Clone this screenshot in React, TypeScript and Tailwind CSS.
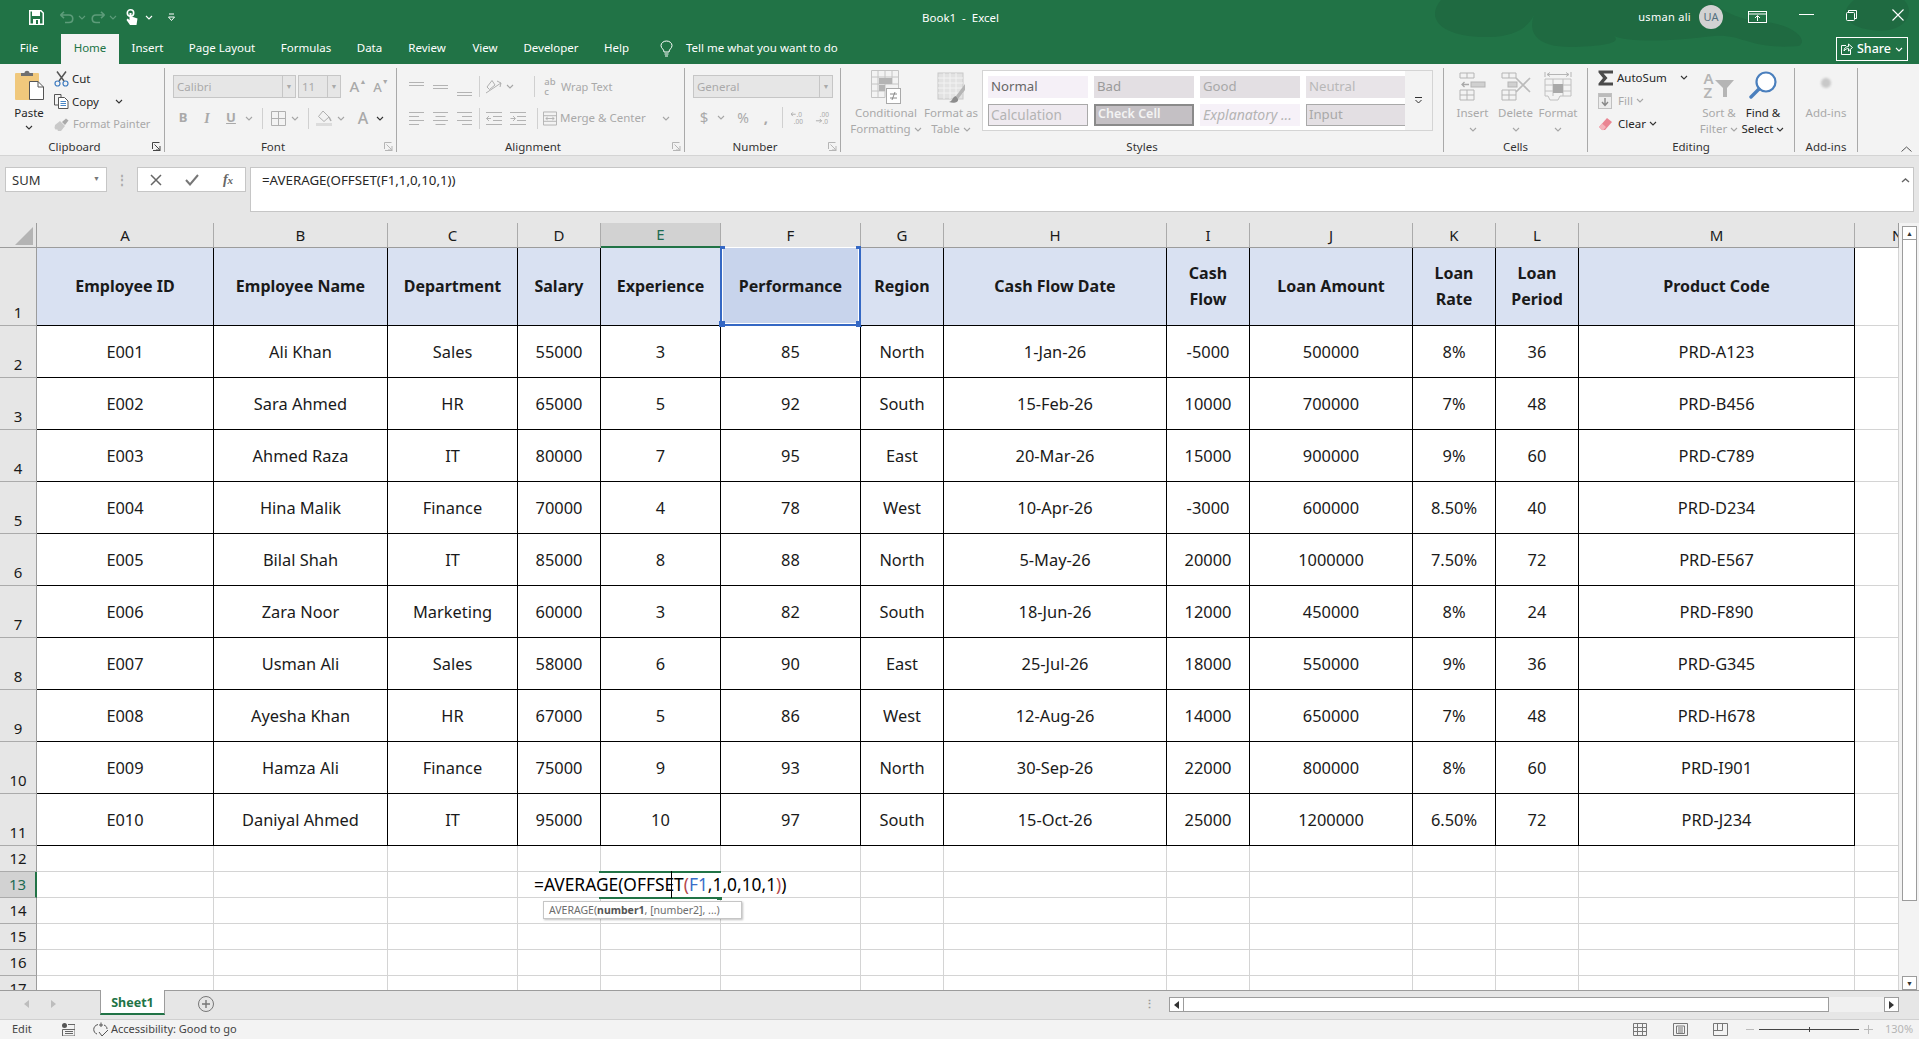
import React from "react";

const Chev = ({ c = "#a6a6a6" }: { c?: string }) => (
  <svg width="8" height="5" viewBox="0 0 8 5" fill="none" className="shrink-0">
    <path d="M1 1L4 4L7 1" stroke={c} strokeWidth="1.1" />
  </svg>
);

const Slot = ({ w, children }: { w: string; children?: React.ReactNode }) => (
  <div className={`${w} h-full flex items-center justify-center shrink-0`}>{children}</div>
);

const VSep = () => <div className="w-px h-[21px] bg-[#d0d0d0]" />;

const Launcher = ({ c = "#b5b5b5" }: { c?: string }) => (
  <svg width="9" height="9" viewBox="0 0 9 9" fill="none" className="absolute right-[3px] bottom-[4px]">
    <path d="M0.5 7V0.5H7.5M8.5 8.5H1M2.5 2.5L7.5 7.5M8 4V8H4" stroke={c} strokeWidth="1" />
  </svg>
);

const Group = ({ w, label, launcher, lc, children }: { w: string; label: string; launcher?: boolean; lc?: string; children: React.ReactNode }) => (
  <>
    <div className={`${w} relative flex flex-col shrink-0`}>
      <div className="h-[75px]">{children}</div>
      <div className={`h-[17px] leading-[17px] text-center text-[11.5px] text-[#333] ${launcher ? "pr-[15px]" : ""}`}>{label}</div>
      {launcher && <Launcher c={lc} />}
    </div>
    <div className="w-px h-[84px] mt-1 bg-[#a9a9a9] shrink-0" />
  </>
);

const Big = ({ w, icon, l1, l2, chev = true, dark }: { w: string; icon: React.ReactNode; l1: string; l2?: string; chev?: boolean; dark?: boolean }) => (
  <div className={`${w} flex flex-col items-center shrink-0 ${dark ? "text-[#262626]" : "text-[#a9a9a9]"}`}>
    <div className="h-[41px] pt-[4px] flex items-center justify-center">{icon}</div>
    <div className="h-[16px] leading-[16px] whitespace-nowrap">{l1}</div>
    <div className="h-[16px] leading-[16px] whitespace-nowrap flex items-center gap-[3px]">
      {l2}
      {chev && <Chev c={dark ? "#333" : "#a6a6a6"} />}
    </div>
  </div>
);

const Cut = () => (
  <svg width="15" height="16" viewBox="0 0 15 16" fill="none">
    <path d="M3 0.5L10 10M12 0.5L5 10" stroke="#555" strokeWidth="1.5" />
    <circle cx="3.5" cy="12.5" r="2.5" stroke="#3f7cc0" strokeWidth="1.2" />
    <circle cx="11.5" cy="12.5" r="2.5" stroke="#3f7cc0" strokeWidth="1.2" />
  </svg>
);
const Copy = () => (
  <svg width="15" height="15" viewBox="0 0 15 15" fill="none">
    <path d="M7 3V0.5H0.5V11H4" stroke="#555" />
    <path d="M4.5 3.5H10.5L14 7V14.5H4.5Z" fill="#fff" stroke="#555" />
    <path d="M6.5 7.5H12M6.5 9.5H12M6.5 11.5H12" stroke="#4a86c5" />
  </svg>
);
const Painter = () => (
  <svg width="16" height="15" viewBox="0 0 16 15" fill="none">
    <path d="M1 8L6 4L11 9L7 14L4 14L3 12L2 13L0.5 11Z" fill="#c9c9c9" />
    <path d="M8 5L12 1.5L14.5 3.5L11 8Z" fill="#aaa" />
  </svg>
);
const Paste = () => (
  <svg width="29" height="30" viewBox="0 0 29 30" fill="none">
    <rect x="0" y="3" width="24" height="27" rx="1" fill="#f0c87c" />
    <path d="M6 6V3H9.5C9.5 0 14.5 0 14.5 3H18V6Z" fill="#6f6f6f" />
    <path d="M14.5 11.5H23L28.5 17V29.5H14.5Z" fill="#fff" stroke="#555" />
    <path d="M23 11.5V17H28.5" stroke="#555" />
  </svg>
);

const COLS = "grid-cols-[37px_177px_174px_130px_83px_120px_140px_83px_223px_83px_163px_83px_83px_276px_44px]";
const COL_LETTERS = ["A", "B", "C", "D", "E", "F", "G", "H", "I", "J", "K", "L", "M"];
const HEAD = ["Employee ID", "Employee Name", "Department", "Salary", "Experience", "Performance", "Region", "Cash Flow Date", "Cash\nFlow", "Loan Amount", "Loan\nRate", "Loan\nPeriod", "Product Code"];
const ROWS: string[][] = [
  ["E001", "Ali Khan", "Sales", "55000", "3", "85", "North", "1-Jan-26", "-5000", "500000", "8%", "36", "PRD-A123"],
  ["E002", "Sara Ahmed", "HR", "65000", "5", "92", "South", "15-Feb-26", "10000", "700000", "7%", "48", "PRD-B456"],
  ["E003", "Ahmed Raza", "IT", "80000", "7", "95", "East", "20-Mar-26", "15000", "900000", "9%", "60", "PRD-C789"],
  ["E004", "Hina Malik", "Finance", "70000", "4", "78", "West", "10-Apr-26", "-3000", "600000", "8.50%", "40", "PRD-D234"],
  ["E005", "Bilal Shah", "IT", "85000", "8", "88", "North", "5-May-26", "20000", "1000000", "7.50%", "72", "PRD-E567"],
  ["E006", "Zara Noor", "Marketing", "60000", "3", "82", "South", "18-Jun-26", "12000", "450000", "8%", "24", "PRD-F890"],
  ["E007", "Usman Ali", "Sales", "58000", "6", "90", "East", "25-Jul-26", "18000", "550000", "9%", "36", "PRD-G345"],
  ["E008", "Ayesha Khan", "HR", "67000", "5", "86", "West", "12-Aug-26", "14000", "650000", "7%", "48", "PRD-H678"],
  ["E009", "Hamza Ali", "Finance", "75000", "9", "93", "North", "30-Sep-26", "22000", "800000", "8%", "60", "PRD-I901"],
  ["E010", "Daniyal Ahmed", "IT", "95000", "10", "97", "South", "15-Oct-26", "25000", "1200000", "6.50%", "72", "PRD-J234"],
];

const RowHead = ({ n, active }: { n: number; active?: boolean }) => (
  <div className={`flex items-end justify-center leading-[25px] text-[15px] ${active ? "bg-[#d2d2d2] text-[#1f6b52] border-r-2 border-r-[#217346] border-b border-b-[#ababab]" : "bg-[#e6e6e6] text-[#1a1a1a] border-r border-r-[#9c9c9c] border-b border-b-[#ababab]"}`}>
    {n}
  </div>
);

const Empty = () => <div className="bg-white border-r border-r-[#d4d4d4] border-b border-b-[#d4d4d4]" />;

const TABS: [string, string][] = [
  ["Insert", "w-[57px]"],
  ["Page Layout", "w-[92px]"],
  ["Formulas", "w-[76px]"],
  ["Data", "w-[51px]"],
  ["Review", "w-[64px]"],
  ["View", "w-[52px]"],
  ["Developer", "w-[80px]"],
  ["Help", "w-[51px]"],
];

export default function App() {
  return (
    <div className="w-[1919px] h-[1039px] overflow-hidden flex flex-col bg-[#e6e6e6] font-['Noto_Sans',sans-serif] text-[11.5px] text-[#262626]">
      {/* Title bar */}
      <div className="relative h-[64px] shrink-0 bg-[#217346] text-white">
        <svg width="520" height="64" viewBox="0 0 520 64" className="absolute left-[1399px] top-0" fill="#1f6a41">
          <path d="M42 0C25 20 45 38 90 37C120 36 130 25 135 15C128 35 140 48 175 47C210 46 222 42 215 36C235 44 280 40 315 36C345 34 350 50 400 46C410 40 395 22 350 20C330 15 320 8 310 0Z" />
          <path d="M455 0C430 20 465 34 490 30C510 26 515 10 505 0Z" />
        </svg>
        {/* Quick access */}
        <div className="relative h-[34px] flex items-center">
          <Slot w="w-[58px] pl-[14px]">
            <svg width="15" height="15" viewBox="0 0 15 15" fill="none">
              <path d="M0.75 0.75H12L14.25 3V14.25H0.75Z" stroke="#fff" strokeWidth="1.5" />
              <rect x="3" y="1" width="8" height="5" fill="#fff" />
              <rect x="4" y="9" width="7" height="5" fill="#fff" />
              <rect x="7" y="10" width="2" height="4" fill="#217346" />
            </svg>
          </Slot>
          <Slot w="w-[16px]">
            <svg width="15" height="13" viewBox="0 0 15 13" fill="none">
              <path d="M1.5 4H10C15 4 15 11.5 10 11.5H6M1.5 4L5 0.8M1.5 4L5 7.2" stroke="#5d9c7a" strokeWidth="1.6" />
            </svg>
          </Slot>
          <Slot w="w-[16px]"><Chev c="#5d9c7a" /></Slot>
          <Slot w="w-[16px]">
            <svg width="15" height="13" viewBox="0 0 15 13" fill="none">
              <path d="M13.5 4H5C0 4 0 11.5 5 11.5H9M13.5 4L10 0.8M13.5 4L10 7.2" stroke="#5d9c7a" strokeWidth="1.6" />
            </svg>
          </Slot>
          <Slot w="w-[14px]"><Chev c="#5d9c7a" /></Slot>
          <Slot w="w-[20px] ml-[2px]">
            <svg width="12" height="17" viewBox="0 0 12 17" fill="none">
              <circle cx="4.5" cy="4" r="3.2" stroke="#fff" strokeWidth="1.6" />
              <path d="M3.5 4V11L1.5 9.5L0.5 11L4 16H10.5L11.5 9.5L5.5 7.5V4Z" fill="#fff" />
            </svg>
          </Slot>
          <Slot w="w-[14px]"><Chev c="#fff" /></Slot>
          <Slot w="w-[30px]">
            <svg width="7" height="9" viewBox="0 0 7 9" fill="none">
              <path d="M1 1H6M0.5 4H6.5L3.5 7.5Z" stroke="#fff" />
            </svg>
          </Slot>
          <div className="absolute left-[922px] top-[9px] text-[11.5px] leading-[17px] whitespace-pre">Book1  -  Excel</div>
          <div className="ml-auto flex items-center h-full">
            <span className="text-[11px] mr-[8px] tracking-[0.3px]">usman ali</span>
            <span className="w-[24px] h-[24px] rounded-full bg-[#d2d2d2] text-[#55707f] flex items-center justify-center text-[11px] mr-[25px]">UA</span>
            <svg width="20" height="13" viewBox="0 0 20 13" fill="none" className="mr-[31px]">
              <rect x="0.5" y="0.5" width="18" height="11" stroke="#fff" />
              <path d="M1 3H18M9.5 10V5M7 7L9.5 4.5L12 7" stroke="#fff" />
            </svg>
            <div className="w-[15px] h-px bg-white mr-[32px] mb-[6px]" />
            <svg width="11" height="11" viewBox="0 0 11 11" fill="none" className="mr-[35px] mb-[4px]">
              <rect x="0.5" y="2.5" width="8" height="8" rx="1" stroke="#fff" />
              <path d="M2.5 2.5V0.5H10.5V8.5H8.5" stroke="#fff" />
            </svg>
            <svg width="12" height="12" viewBox="0 0 12 12" fill="none" className="mr-[15px] mb-[4px]">
              <path d="M0.5 0.5L11.5 11.5M11.5 0.5L0.5 11.5" stroke="#fff" strokeWidth="1.1" />
            </svg>
          </div>
        </div>
        {/* Tabs */}
        <div className="relative h-[30px] flex text-[11.5px] leading-[28px]">
          <div className="w-[61px] text-center pr-[3px]">File</div>
          <div className="w-[58px] h-[30px] bg-[#f3f3f3] text-[#217346] text-center">Home</div>
          {TABS.map(([t, w]) => (
            <div key={t} className={`${w} text-center whitespace-nowrap`}>{t}</div>
          ))}
          <Slot w="w-[30px] ml-[9px] -mt-[1px]">
            <svg width="13" height="17" viewBox="0 0 13 17" fill="none">
              <path d="M4 12C4 9 1 8.5 1 5.5C1 3 3.5 1 6.5 1C9.5 1 12 3 12 5.5C12 8.5 9 9 9 12ZM4.5 14H8.5M5 16H8" stroke="#fff" />
            </svg>
          </Slot>
          <div className="ml-[5px] whitespace-nowrap">Tell me what you want to do</div>
          <div className="absolute left-[1836px] top-[3px] w-[72px] h-[24px] border border-white flex items-center justify-center gap-[4px] text-[12.5px] leading-none font-medium">
            <svg width="12" height="12" viewBox="0 0 12 12" fill="none">
              <path d="M5 2.5H0.5V11.5H9.5V7M3 8C3 5 5 3.5 7.5 3.5V1L11.5 4.5L7.5 8V5.5C6 5.5 4.5 6 3 8Z" stroke="#fff" />
            </svg>
            Share
            <Chev c="#fff" />
          </div>
        </div>
      </div>

      {/* Ribbon */}
      <div className="relative h-[92px] shrink-0 bg-[#f3f3f3] border-b border-b-[#d4d4d4] flex text-[11.5px]">
        <Group w="w-[164px]" label="Clipboard" launcher lc="#444">
          <div className="flex pt-[3px]">
            <div className="w-[50px] ml-[4px] flex flex-col items-center text-[#262626]">
              <div className="h-[34px] pt-[3px]"><Paste /></div>
              <div className="h-[18px] leading-[18px] mt-[3px]">Paste</div>
              <div className="h-[10px] flex items-center"><Chev c="#333" /></div>
            </div>
            <div className="flex flex-col">
              <div className="h-[23px] flex items-center gap-[3px]"><Cut /><span>Cut</span></div>
              <div className="h-[23px] flex items-center gap-[3px]"><Copy /><span>Copy</span><span className="ml-[13px]"><Chev c="#333" /></span></div>
              <div className="h-[23px] flex items-center gap-[3px] text-[#a9a9a9] text-[11px]"><Painter /><span className="whitespace-nowrap">Format Painter</span></div>
            </div>
          </div>
        </Group>

        <Group w="w-[231px]" label="Font" launcher>
          <div className="pt-[11px] pl-[8px] flex h-[34px]">
            <div className="w-[123px] h-[23px] border border-[#c6c6c6] bg-[#e6e6e6] flex text-[#aaa]">
              <span className="flex-1 pl-[3px] leading-[21px]">Calibri</span>
              <span className="w-[13px] border-l border-l-[#c6c6c6] flex items-center justify-center"><span className="text-[7px] leading-none">▼</span></span>
            </div>
            <div className="w-[43px] h-[23px] ml-[2px] border border-[#c6c6c6] bg-[#e6e6e6] flex text-[#aaa]">
              <span className="flex-1 pl-[3px] leading-[21px]">11</span>
              <span className="w-[13px] border-l border-l-[#c6c6c6] flex items-center justify-center"><span className="text-[7px] leading-none">▼</span></span>
            </div>
            <div className="ml-[6px] w-[22px] h-[23px] flex justify-center text-[15px] leading-[23px] text-[#a9a9a9] font-medium">A<span className="text-[7px] leading-[14px]">▲</span></div>
            <div className="w-[24px] h-[23px] flex justify-center text-[13px] leading-[25px] text-[#a9a9a9] font-medium">A<span className="text-[7px] leading-[14px]">▼</span></div>
          </div>
          <div className="h-[24px] mt-[8px] pl-[6px] flex text-[#a9a9a9] text-[13px]">
            <Slot w="w-[24px]"><b>B</b></Slot>
            <Slot w="w-[24px]"><i className="font-['Liberation_Serif'] text-[14px] font-bold">I</i></Slot>
            <Slot w="w-[24px]"><b className="underline">U</b></Slot>
            <Slot w="w-[12px]"><Chev /></Slot>
            <Slot w="w-[14px]"><VSep /></Slot>
            <Slot w="w-[18px]">
              <svg width="15" height="15" viewBox="0 0 15 15" fill="none"><path d="M0.5 0.5H14.5V14.5H0.5ZM7.5 0.5V14.5M0.5 7.5H14.5" stroke="#b0b0b0" /></svg>
            </Slot>
            <Slot w="w-[16px]"><Chev /></Slot>
            <Slot w="w-[10px]"><VSep /></Slot>
            <Slot w="w-[22px]">
              <svg width="16" height="16" viewBox="0 0 16 16" fill="none">
                <path d="M7 1L13 7L8 11.5L2.5 6.5Z" stroke="#b0b0b0" /><path d="M13 7L15 11" stroke="#b0b0b0" strokeWidth="1.5" />
                <rect x="0" y="13" width="16" height="3" fill="#dcdcdc" />
              </svg>
            </Slot>
            <Slot w="w-[12px]"><Chev /></Slot>
            <Slot w="w-[24px] ml-[4px]"><span className="text-[16px] font-medium">A</span></Slot>
            <Slot w="w-[10px]"><Chev c="#333" /></Slot>
          </div>
        </Group>

        <Group w="w-[287px]" label="Alignment" launcher>
          <div className="h-[29px] mt-[8px] pl-[7px] flex text-[#a9a9a9]">
            <Slot w="w-[24px]"><svg width="15" height="14" viewBox="0 0 15 14"><path d="M0 2.5H15M0 5.5H15" stroke="#b3b3b3" /></svg></Slot>
            <Slot w="w-[24px]"><svg width="15" height="14" viewBox="0 0 15 14"><path d="M0 5.5H15M0 8.5H15" stroke="#b3b3b3" /></svg></Slot>
            <Slot w="w-[24px]"><svg width="15" height="14" viewBox="0 0 15 14" className="mt-[6px]"><path d="M0 9.5H15M0 12.5H15" stroke="#b3b3b3" /></svg></Slot>
            <Slot w="w-[6px]"><VSep /></Slot>
            <Slot w="w-[23px]">
              <svg width="17" height="15" viewBox="0 0 17 15" fill="none"><path d="M2 8L7 1.5L10 6L4.5 10.5ZM1 14L16 4M12 2L16 4L15 8" stroke="#b0b0b0" /></svg>
            </Slot>
            <Slot w="w-[10px]"><Chev /></Slot>
            <div className="w-[16px]" />
            <Slot w="w-[6px]"><VSep /></Slot>
            <div className="w-[5px]" />
            <Slot w="w-[16px]">
              <div className="flex flex-col text-[9.5px] leading-[10px] text-[#aaa] font-medium"><span>ab</span><span>c</span></div>
            </Slot>
            <span className="ml-[3px] leading-[29px] whitespace-nowrap text-[11px]">Wrap Text</span>
          </div>
          <div className="h-[24px] mt-[5px] pl-[7px] flex text-[#a9a9a9]">
            <Slot w="w-[24px]"><svg width="15" height="13" viewBox="0 0 15 13"><path d="M0 .5H15M0 4.5H10M0 8.5H15M0 12.5H10" stroke="#b3b3b3" /></svg></Slot>
            <Slot w="w-[24px]"><svg width="15" height="13" viewBox="0 0 15 13"><path d="M0 .5H15M2.5 4.5H12.5M0 8.5H15M2.5 12.5H12.5" stroke="#b3b3b3" /></svg></Slot>
            <Slot w="w-[24px]"><svg width="15" height="13" viewBox="0 0 15 13"><path d="M0 .5H15M5 4.5H15M0 8.5H15M5 12.5H15" stroke="#b3b3b3" /></svg></Slot>
            <Slot w="w-[6px]"><VSep /></Slot>
            <Slot w="w-[24px]"><svg width="16" height="13" viewBox="0 0 16 13" fill="none"><path d="M0 .5H16M7 4.5H16M7 8.5H16M0 12.5H16M5 6.5H0.5M3 4L0.5 6.5L3 9" stroke="#b3b3b3" /></svg></Slot>
            <Slot w="w-[24px]"><svg width="16" height="13" viewBox="0 0 16 13" fill="none"><path d="M0 .5H16M7 4.5H16M7 8.5H16M0 12.5H16M0.5 6.5H5M3 4L5.5 6.5L3 9" stroke="#b3b3b3" /></svg></Slot>
            <div className="w-[4px]" />
            <Slot w="w-[6px]"><VSep /></Slot>
            <div className="w-[3px]" />
            <Slot w="w-[14px]">
              <svg width="15" height="15" viewBox="0 0 15 15" fill="none"><path d="M0.5 0.5H14.5V14.5H0.5ZM0.5 4.5H14.5M0.5 10.5H14.5M3 7.5H12M3 7.5L5 6M3 7.5L5 9M12 7.5L10 6M12 7.5L10 9" stroke="#b0b0b0" /></svg>
            </Slot>
            <span className="ml-[3px] leading-[24px] whitespace-nowrap">Merge &amp; Center</span>
            <span className="ml-[16px] flex items-center"><Chev /></span>
          </div>
        </Group>

        <Group w="w-[155px]" label="Number" launcher>
          <div className="pt-[11px] pl-[8px] h-[34px]">
            <div className="w-[140px] h-[23px] border border-[#c6c6c6] bg-[#e6e6e6] flex text-[#aaa]">
              <span className="flex-1 pl-[3px] leading-[21px]">General</span>
              <span className="w-[13px] border-l border-l-[#c6c6c6] flex items-center justify-center"><span className="text-[7px] leading-none">▼</span></span>
            </div>
          </div>
          <div className="h-[24px] mt-[7px] pl-[8px] flex text-[#a9a9a9]">
            <Slot w="w-[22px]"><span className="text-[15px]">$</span></Slot>
            <Slot w="w-[12px]"><Chev /></Slot>
            <Slot w="w-[32px]"><span className="text-[14px]">%</span></Slot>
            <Slot w="w-[14px]"><b className="text-[15px] leading-[15px]">,</b></Slot>
            <Slot w="w-[18px]"><VSep /></Slot>
            <Slot w="w-[14px]">
              <svg width="15" height="15" viewBox="0 0 15 15">
                <text x="6" y="6.5" fontSize="7" fill="#aaa">.0</text>
                <text x="3" y="14" fontSize="7" fill="#aaa">.00</text>
                <path d="M0 4H5M2 2L0 4L2 6" stroke="#aaa" fill="none" />
              </svg>
            </Slot>
            <Slot w="w-[15px] ml-[10px]">
              <svg width="16" height="15" viewBox="0 0 16 15">
                <text x="5" y="6.5" fontSize="7" fill="#aaa">.00</text>
                <text x="8" y="14" fontSize="7" fill="#aaa">.0</text>
                <path d="M1 11H7M5 9L7 11L5 13" stroke="#aaa" fill="none" />
              </svg>
            </Slot>
          </div>
        </Group>

        <Group w="w-[602px]" label="Styles">
          <div className="flex h-full pl-[10px]">
            <Big w="w-[70px]" l1="Conditional" l2="Formatting" icon={
              <svg width="30" height="34" viewBox="0 0 30 34" fill="none">
                <path d="M0.5 0.5H27.5V28M0.5 0.5V27.5H14M7 0.5V27.5M14 0.5V27.5M21 0.5V14M0.5 7H27.5M0.5 14H27.5M0.5 21H14" stroke="#c4c4c4" />
                <rect x="8" y="8" width="13" height="6" fill="#b4b4b4" /><rect x="8" y="15" width="6" height="6" fill="#b4b4b4" />
                <rect x="15.5" y="18.5" width="14" height="15" fill="#fff" stroke="#a9a9a9" />
                <path d="M19 24H26M19 28H26M24 22L21 30" stroke="#8a8a8a" />
              </svg>
            } />
            <Big w="w-[60px]" l1="Format as" l2="Table" icon={
              <svg width="30" height="34" viewBox="0 0 30 34" fill="none">
                <rect x="2" y="3" width="25" height="26" fill="#e2e2e2" stroke="#c8c8c8" />
                <path d="M2 8H27M2 13H27M2 18H27M2 23H27M8 3V29M14 3V29M20 3V29" stroke="#f3f3f3" />
                <path d="M29 14L20 26L22 29L29 20Z" fill="#b5b5b5" /><path d="M20 26C16 27 17 31 13 32C18 34 23 32 22 29Z" fill="#8c8c8c" />
              </svg>
            } />
            <div className="w-[451px] h-[61px] mt-[6px] ml-[1px] border border-[#d4d4d4] bg-white flex">
              <div className="w-[422px] pt-[5px] pl-[5px] grid grid-cols-[100px_100px_100px_100px] grid-rows-[22px_22px] gap-x-[6px] gap-y-[6px] text-[13.2px] leading-[21px]">
                <div className="bg-[#f5f0f7] text-[#666] pl-[3px]">Normal</div>
                <div className="bg-[#e3dfe3] text-[#9a9a9a] pl-[3px]">Bad</div>
                <div className="bg-[#e3dfe3] text-[#a8a8a8] pl-[3px]">Good</div>
                <div className="bg-[#e8e4e8] text-[#b8b8b8] pl-[3px]">Neutral</div>
                <div className="bg-[#efeaf0] border border-[#a9a9a9] text-[#b4b4b4] pl-[2px] leading-[19px] text-[13.6px]">Calculation</div>
                <div className="bg-[#c4c0c4] border-2 border-double border-[#8a8a8a] text-[#f3f3f3] font-semibold pl-[2px] leading-[16px] text-[12.5px]">Check Cell</div>
                <div className="bg-[#f6f1f8] text-[#b4b4b4] italic pl-[3px] whitespace-nowrap text-[14px]">Explanatory ...</div>
                <div className="bg-[#e3dfe3] border border-[#a9a9a9] text-[#a9a9a9] pl-[2px] leading-[19px]">Input</div>
              </div>
              <div className="flex-1 bg-[#f3f3f3] flex items-center justify-center">
                <svg width="7" height="7" viewBox="0 0 7 7" fill="none"><path d="M0 .5H7M0.5 3L3.5 6L6.5 3" stroke="#333" /></svg>
              </div>
            </div>
          </div>
        </Group>

        <Group w="w-[143px]" label="Cells">
          <div className="flex pl-[7px]">
            <Big w="w-[43px]" l1="Insert" icon={
              <svg width="27" height="29" viewBox="0 0 27 29" fill="none">
                <path d="M1 1H15V6H1ZM8 1V6M1 18H15V28H1ZM1 23H15M8 18V28" stroke="#b5b5b5" />
                <rect x="12" y="10" width="14" height="5" fill="#d0d0d0" stroke="#b5b5b5" />
                <path d="M10 12.5H3M5.5 10L3 12.5L5.5 15" stroke="#a9a9a9" strokeWidth="1.3" />
              </svg>
            } />
            <Big w="w-[43px]" l1="Delete" icon={
              <svg width="30" height="29" viewBox="0 0 30 29" fill="none">
                <path d="M1 1H15V6H1ZM8 1V6M1 18H15V28H1ZM1 23H15M8 18V28" stroke="#b5b5b5" />
                <rect x="7" y="10" width="9" height="5" fill="#d0d0d0" stroke="#b5b5b5" />
                <path d="M15 6L29 20M29 6L15 20" stroke="#bbb" strokeWidth="1.7" />
              </svg>
            } />
            <Big w="w-[42px]" l1="Format" icon={
              <svg width="28" height="31" viewBox="0 0 28 31" fill="none">
                <path d="M1 1V6M27 1V6M3 3.5H25M3 3.5L6 1.5M3 3.5L6 5.5M25 3.5L22 1.5M25 3.5L22 5.5" stroke="#b5b5b5" />
                <path d="M1 8H27V25H16L14 29H6L4 25H1ZM9 8V25M19 8V25M1 14H27M1 20H27" stroke="#c0c0c0" />
                <rect x="9" y="13" width="10" height="9" fill="#a9a9a9" />
              </svg>
            } />
          </div>
        </Group>

        <Group w="w-[206px]" label="Editing">
          <div className="flex">
            <div className="w-[108px] pt-[2px] pl-[10px] flex flex-col">
              <div className="h-[23px] flex items-center text-[#262626]">
                <svg width="16" height="16" viewBox="0 0 16 16"><path d="M0.5 0.5H15V3.5H5.5L9.5 8L5.5 12.5H15V15.5H0.5V13.5L5 8L0.5 2.5Z" fill="#4a4a4a" /></svg>
                <span className="ml-[3px]">AutoSum</span>
                <span className="ml-[13px]"><Chev c="#333" /></span>
              </div>
              <div className="h-[23px] flex items-center text-[#a9a9a9]">
                <svg width="15" height="16" viewBox="0 0 15 16" fill="none"><rect x="0.5" y="0.5" width="13" height="15" stroke="#c0c0c0" fill="#ececec" /><rect x="1" y="1" width="12" height="3" fill="#bbb" /><path d="M7 5V12M4 9L7 12.5L10 9" stroke="#888" strokeWidth="1.4" /></svg>
                <span className="ml-[5px]">Fill</span>
                <span className="ml-[3px]"><Chev /></span>
              </div>
              <div className="h-[23px] flex items-center text-[#262626]">
                <svg width="15" height="14" viewBox="0 0 15 14"><path d="M9 1L14 5L7 13L4 13L1 10Z" fill="#ea8592" /><path d="M1 10L4 6.5L8 10L5 13.5Z" fill="#f4b4bb" /></svg>
                <span className="ml-[5px]">Clear</span>
                <span className="ml-[3px]"><Chev c="#333" /></span>
              </div>
            </div>
            <Big w="w-[46px]" l1="Sort &" l2="Filter" icon={
              <div className="-mt-[4px] flex items-start text-[#b5b5b5] font-semibold text-[15px] leading-[14px]">
                <div className="flex flex-col w-[12px]"><span>A</span><span>Z</span></div>
                <svg width="20" height="20" viewBox="0 0 20 20" fill="none" className="mt-[8px] -ml-[1px]">
                  <path d="M0 1H19L12 9V18H8V9Z" fill="#b5b5b5" />
                </svg>
              </div>
            } />
            <Big w="w-[42px]" l1="Find &" l2="Select" dark icon={
              <div className="-mt-[4px]">
              <svg width="28" height="28" viewBox="0 0 28 28" fill="none">
                <circle cx="17" cy="11" r="9.5" stroke="#4a7fbd" strokeWidth="2.2" fill="#fff" />
                <path d="M10 18L2 26" stroke="#4a7fbd" strokeWidth="3.4" strokeLinecap="round" />
              </svg>
              </div>
            } />
          </div>
        </Group>

        <Group w="w-[62px]" label="Add-ins">
          <div className="flex flex-col items-center text-[#a9a9a9]">
            <div className="h-[41px] flex items-center pb-[3px]"><div className="w-[10px] h-[10px] rounded-full bg-[#c8c8c8] blur-[1px]" /></div>
            <div className="leading-[16px]">Add-ins</div>
          </div>
        </Group>

        <svg width="11" height="6" viewBox="0 0 11 6" fill="none" className="absolute left-[1901px] bottom-[3px]">
          <path d="M0.5 5.5L5.5 1L10.5 5.5" stroke="#555" />
        </svg>
      </div>

      {/* Formula bar */}
      <div className="h-[67px] shrink-0 bg-[#e6e6e6] pt-[11px] pl-[5px] flex">
        <div className="w-[102px] h-[25px] bg-white border border-[#c6c6c6] flex items-center px-[6px] justify-between text-[13px] text-[#333]">
          <span className="mt-[2px]">SUM</span>
          <span className="text-[7px] text-[#777]">▼</span>
        </div>
        <div className="w-[30px] h-[25px] flex items-center justify-center text-[#aaa] text-[12px] leading-none font-bold">⋮</div>
        <div className="w-[109px] h-[25px] bg-white border border-[#c6c6c6] flex items-center text-[#666]">
          <Slot w="w-[36px]"><svg width="12" height="12" viewBox="0 0 12 12" fill="none"><path d="M1 1L11 11M11 1L1 11" stroke="#666" strokeWidth="1.5" /></svg></Slot>
          <Slot w="w-[36px]"><svg width="14" height="12" viewBox="0 0 14 12" fill="none"><path d="M1 6L5 10.5L13 1" stroke="#777" strokeWidth="2" /></svg></Slot>
          <Slot w="w-[36px]"><i className="font-['Liberation_Serif'] text-[14px] font-bold leading-none">f<span className="text-[11px]">x</span></i></Slot>
        </div>
        <div className="w-[1664px] h-[45px] ml-[4px] bg-white border border-[#c6c6c6] relative pl-[11px] pt-[2px] text-[13.3px] leading-[20px] text-[#262626]">
          =AVERAGE(OFFSET(F1,1,0,10,1))
          <svg width="9" height="5" viewBox="0 0 9 5" fill="none" className="absolute right-[3px] top-[10px]"><path d="M1 4L4.5 1L8 4" stroke="#666" strokeWidth="1.4" /></svg>
        </div>
      </div>

      {/* Sheet */}
      <div className="h-[767px] shrink-0 flex bg-white">
        <div className={`w-[1899px] shrink-0 grid ${COLS} grid-rows-[25px_78px_repeat(10,52px)_repeat(6,26px)] overflow-hidden text-[#1a1a1a] relative`}>
          {/* Column header */}
          <div className="relative bg-[#e6e6e6] border-r border-r-[#9c9c9c] border-b border-b-[#9c9c9c]">
            <svg width="18" height="18" viewBox="0 0 18 18" className="absolute left-[15px] top-[4px]"><path d="M18 0V18H0Z" fill="#b4b4b4" /></svg>
          </div>
          {COL_LETTERS.map((c) => (
            <div key={c} className={`flex items-center justify-center text-[15px] border-r border-r-[#ababab] ${c === "E" ? "bg-[#d2d2d2] text-[#1f6b52] border-b-2 border-b-[#217346]" : "bg-[#e6e6e6] border-b border-b-[#9c9c9c]"}`}>{c}</div>
          ))}
          <div className="bg-[#e6e6e6] border-b border-b-[#9c9c9c] border-r border-r-[#9c9c9c] overflow-hidden pl-[37px] text-[15px] leading-[24px]">N</div>

          {/* Header row */}
          <RowHead n={1} />
          {HEAD.map((h, i) => (
            <div key={h} className={`relative flex items-center justify-center text-center whitespace-pre-line font-bold text-[16px] leading-[26px] pb-[1px] border-r border-r-black border-b border-b-black ${i === 5 ? "bg-[#c8d4ec]" : "bg-[#d9e1f2]"}`}>
              {h}
              {i === 5 && (
                <div className="absolute -left-px -top-px -right-px -bottom-px border-l-2 border-r-2 border-b-2 border-[#3568c4]">
                  <div className="absolute inset-0 border border-white" />
                  <div className="absolute -left-[2px] -top-[1px] w-[5px] h-[3px] bg-[#3568c4]" />
                  <div className="absolute -right-[2px] -top-[1px] w-[5px] h-[3px] bg-[#3568c4]" />
                  <div className="absolute -left-[3px] -bottom-[3px] w-[6px] h-[6px] bg-[#3568c4]" />
                  <div className="absolute -right-[3px] -bottom-[3px] w-[6px] h-[6px] bg-[#3568c4]" />
                </div>
              )}
            </div>
          ))}
          <Empty />

          {/* Data rows */}
          {ROWS.map((row, r) => (
            <React.Fragment key={r}>
              <RowHead n={r + 2} />
              {row.map((v, i) => (
                <div key={i} className="flex items-center justify-center text-[16.4px] pt-[1px] bg-white border-r border-r-black border-b border-b-black whitespace-nowrap">{v}</div>
              ))}
              <Empty />
            </React.Fragment>
          ))}

          {/* Row 12 */}
          <RowHead n={12} />
          {COL_LETTERS.map((c) => <Empty key={c} />)}
          <Empty />

          {/* Row 13 */}
          <RowHead n={13} active />
          <Empty /><Empty /><Empty />
          <div className="col-span-3 relative bg-white border-r border-r-[#d4d4d4] border-b border-b-[#d4d4d4]">
            <div className="absolute left-[16px] top-[0px] h-[25px] leading-[25px] text-[17.35px] whitespace-nowrap text-black">
              =AVERAGE(OFFSET<span className="text-[#b5484a]">(</span><span className="text-[#3a6ec8]">F1</span>,1,0,10,1<span className="text-[#b5484a]">)</span>)
            </div>
            <div className="absolute left-[81px] -top-[1px] w-[122px] h-[2px] bg-[#217346]" />
            <div className="absolute left-[81px] top-[25px] w-[118px] h-[2px] bg-[#217346]" />
            <div className="absolute left-[199px] top-[25px] w-[5px] h-[3px] bg-[#217346]" />
            <div className="absolute left-[153px] -top-[1px] w-px h-[27px] bg-black" />
            <div className="absolute z-10 left-[25px] top-[29px] w-[199px] h-[18px] bg-white border border-[#c6c6c6] shadow-[1px_1px_2px_rgba(0,0,0,0.25)] text-[10.5px] leading-[16px] text-[#6d6d6d] pl-[5px] whitespace-nowrap">
              AVERAGE(<b className="text-[#555]">number1</b>, [number2], ...)
            </div>
          </div>
          {COL_LETTERS.slice(6).map((c) => <Empty key={c} />)}
          <Empty />

          {[14, 15, 16, 17].map((n) => (
            <React.Fragment key={n}>
              <RowHead n={n} />
              {COL_LETTERS.map((c) => <Empty key={c} />)}
              <Empty />
            </React.Fragment>
          ))}
        </div>
        {/* Vertical scrollbar */}
        <div className="flex-1 bg-[#f3f3f3] flex flex-col items-center pt-[3px] pl-[3px] pr-[2px] border-r border-r-[#f3f3f3]">
          <div className="w-[15px] h-[14px] bg-white border border-[#9c9c9c] flex items-center justify-center text-[7px] leading-none text-[#333]">▲</div>
          <div className="w-[15px] h-[661px] bg-white border-x border-b border-[#9c9c9c]" />
          <div className="flex-1" />
          <div className="w-[15px] h-[14px] bg-white border border-[#9c9c9c] flex items-center justify-center text-[7px] leading-none text-[#333]">▼</div>
        </div>
      </div>

      {/* Sheet tabs */}
      <div className="h-[29px] shrink-0 border-t border-t-[#9c9c9c] bg-[#e6e6e6] relative flex">
        <div className="w-[100px] flex items-center pl-[24px] gap-[22px] pb-[3px]">
          <span className="w-0 h-0 border-y-[4px] border-y-transparent border-r-[5px] border-r-[#bdbdbd]" />
          <span className="w-0 h-0 border-y-[4px] border-y-transparent border-l-[5px] border-l-[#bdbdbd]" />
        </div>
        <div className="w-[65px] h-[25px] bg-white border-x border-x-[#9c9c9c] border-b-2 border-b-[#217346] -mt-px text-[#217346] font-bold text-[12.5px] leading-[25px] text-center">Sheet1</div>
        <div className="ml-[33px] mt-[5px] w-[16px] h-[16px] rounded-full border border-[#777] flex items-center justify-center">
          <svg width="8" height="8" viewBox="0 0 8 8"><path d="M4 0V8M0 4H8" stroke="#777" strokeWidth="1.4" /></svg>
        </div>
        <div className="ml-auto flex items-center h-[27px]">
          <span className="text-[#999] text-[11px] mr-[14px] font-bold">⋮</span>
          <div className="w-[15px] h-[15px] bg-white border border-[#9c9c9c] flex items-center justify-center">
            <span className="w-0 h-0 border-y-[4px] border-y-transparent border-r-[5px] border-r-[#333]" />
          </div>
          <div className="w-[645px] h-[15px] bg-white border-y border-r border-[#9c9c9c]" />
          <div className="w-[55px] h-[15px] bg-[#f0f0f0]" />
          <div className="w-[15px] h-[15px] bg-white border border-[#9c9c9c] flex items-center justify-center">
            <span className="w-0 h-0 border-y-[4px] border-y-transparent border-l-[5px] border-l-[#333]" />
          </div>
          <div className="w-[20px]" />
        </div>
      </div>

      {/* Status bar */}
      <div className="flex-1 bg-[#f3f3f3] border-t border-t-[#d0d0d0] flex items-center text-[11px] text-[#444]">
        <span className="ml-[12px] w-[50px]">Edit</span>
        <svg width="13" height="13" viewBox="0 0 13 13" fill="none">
          <circle cx="2.5" cy="2.5" r="2.5" fill="#555" /><path d="M6 1.5H13V13H0.5V6.5H13M3 8.5H11M3 10.5H11" stroke="#666" />
        </svg>
        <svg width="16" height="15" viewBox="0 0 16 15" fill="none" className="ml-[18px]">
          <path d="M5 2.5C-1 4 0 11 4 12M8 0.5V5M6 3H10M11 3C13 4 14 5 14 7M6 10L9 14L15 8" stroke="#555" />
        </svg>
        <span className="ml-[2px]">Accessibility: Good to go</span>
        <div className="ml-auto flex items-center">
          <svg width="14" height="13" viewBox="0 0 14 13" fill="none"><path d="M0.5 0.5H13.5V12.5H0.5ZM0.5 4.5H13.5M0.5 8.5H13.5M4.5 0.5V12.5M9.5 0.5V12.5" stroke="#777" /></svg>
          <svg width="15" height="13" viewBox="0 0 15 13" fill="none" className="ml-[26px]"><path d="M0.5 0.5H14.5V12.5H0.5ZM3.5 3H11.5V10.5H3.5ZM5 5H10M5 7H10M5 9H10" stroke="#777" /></svg>
          <svg width="15" height="13" viewBox="0 0 15 13" fill="none" className="ml-[25px]"><path d="M0.5 0.5H14.5V12.5H0.5ZM0.5 7.5H9.5V0.5M4.5 0.5V7.5" stroke="#777" /></svg>
          <div className="w-[8px] h-px bg-[#bbb] ml-[18px]" />
          <div className="relative w-[100px] h-px bg-[#444] ml-[5px]">
            <div className="absolute left-1/2 -top-[2px] w-px h-[5px] bg-[#444]" />
          </div>
          <svg width="9" height="9" viewBox="0 0 9 9" className="ml-[5px]"><path d="M4.5 0V9M0 4.5H9" stroke="#bbb" /></svg>
          <span className="ml-[12px] mr-[8px] text-[#b5b5b5] w-[26px]">130%</span>
        </div>
      </div>
    </div>
  );
}
